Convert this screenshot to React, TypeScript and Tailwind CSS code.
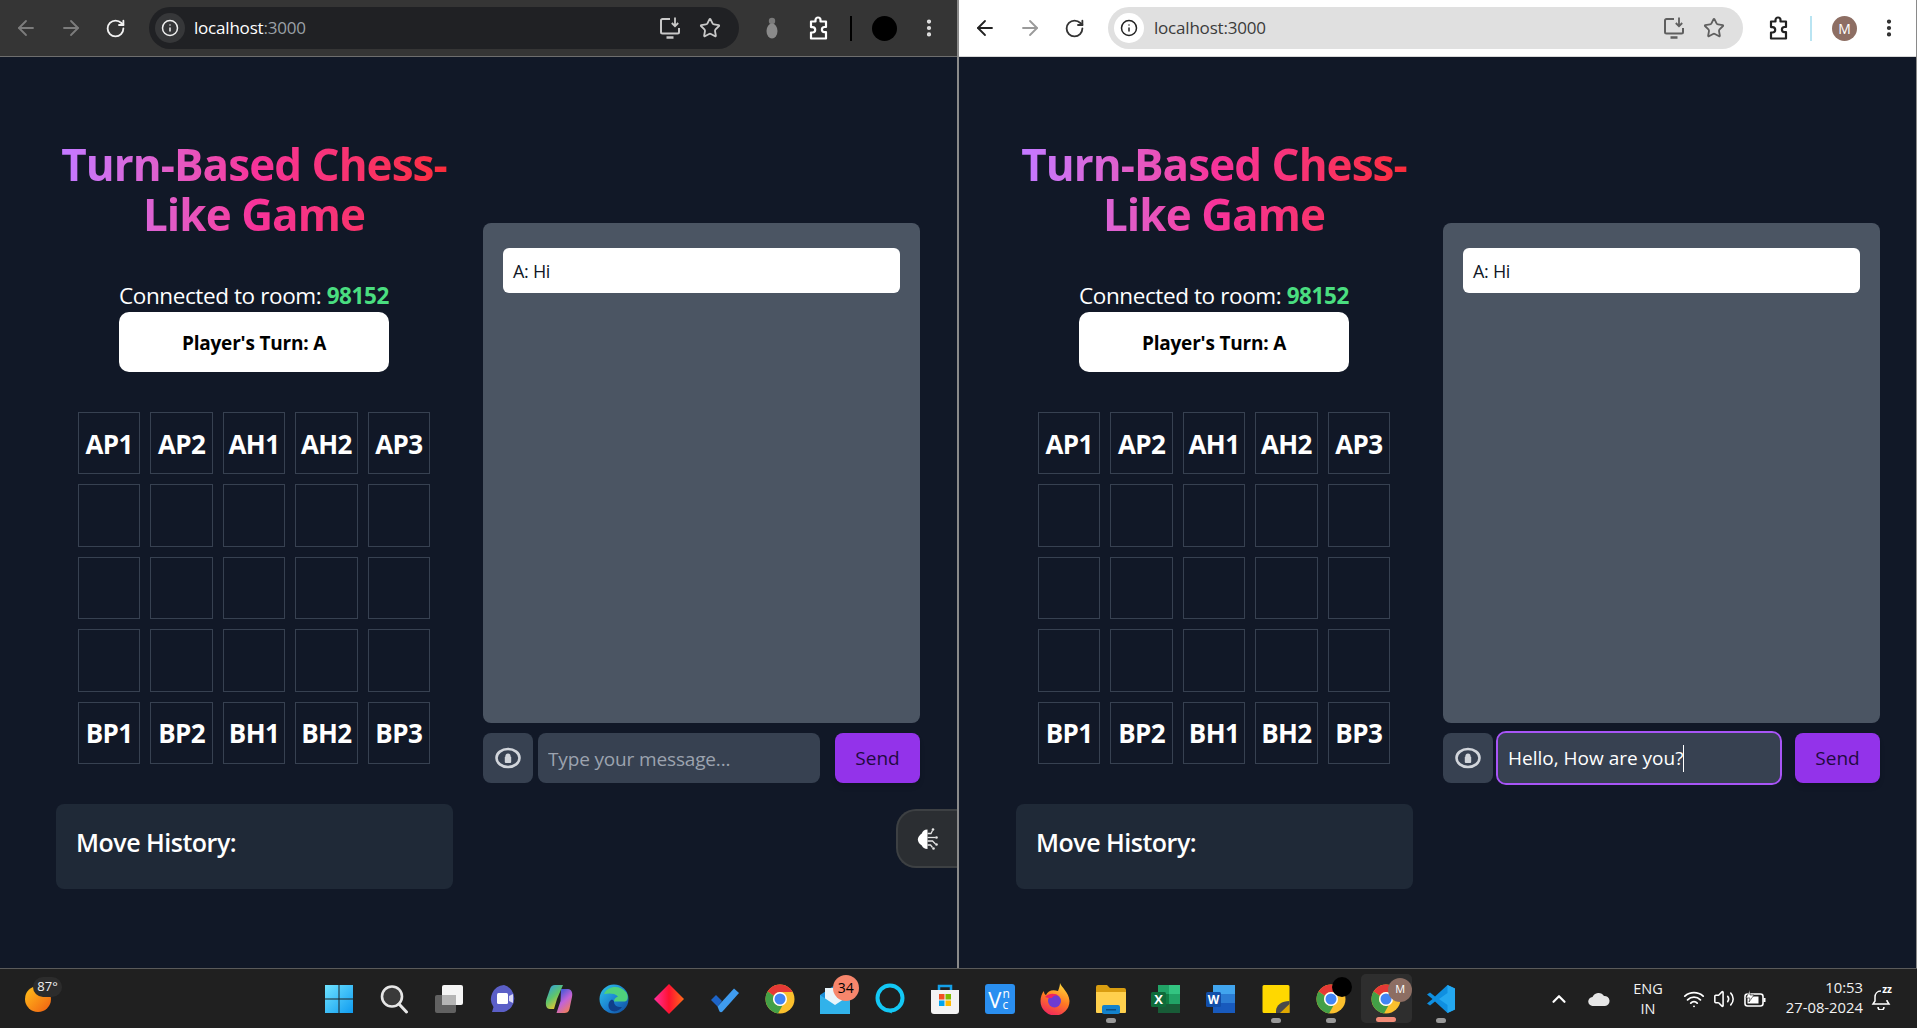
import React from "react";
import { ArrowLeft, ArrowRight, RotateCw, Star, EllipsisVertical, Info, ChevronUp, Wifi, Volume2 } from "lucide-react";

const pieces = [
  ["AP1", "AP2", "AH1", "AH2", "AP3"],
  ["", "", "", "", ""],
  ["", "", "", "", ""],
  ["", "", "", "", ""],
  ["BP1", "BP2", "BH1", "BH2", "BP3"],
];

function InstallIcon({ color }: { color: string }) {
  return (
    <svg width="24" height="24" viewBox="0 0 24 24" fill="none" stroke={color} strokeWidth="2">
      <path d="M12 3H4.500A1.500 1.500 0 0 0 3 4.500V16a1.500 1.500 0 0 0 1.500 1.500H19.500A1.500 1.500 0 0 0 21 16V12" />
      <path d="M8.500 21.500h7" strokeWidth="2.500" />
      <path d="M17 1.500V10M13.800 7l3.200 3.200L20.200 7" strokeWidth="1.800" />
    </svg>
  );
}

function PuzzleIcon({ color }: { color: string }) {
  return (
    <svg width="24" height="26" viewBox="0 0 24 26" fill="none" stroke={color} strokeWidth="2.200" strokeLinejoin="round">
      <path d="M5 6.500h4.500V5a2.500 2.500 0 0 1 5 0v1.500H20V12h-1.500a2.600 2.600 0 0 0 0 5.200H20V23.500H5V17.500h1.500a2.700 2.700 0 0 0 0-5.400H5Z" />
    </svg>
  );
}

function Toolbar({ dark }: { dark: boolean }) {
  const main = dark ? "#e3e3e3" : "#2b2b2b";
  const tool = dark ? "#c9c9c9" : "#5f5f5f";
  return (
    <div className={`flex h-[57px] shrink-0 items-center border-b pl-[3px] ${dark ? "border-[#6e6e6e] bg-[#353535]" : "border-[#d8d8d8] bg-white"}`}>
      <div className="flex h-[45px] w-[45px] items-center justify-center"><ArrowLeft size={24} strokeWidth={1.8} color={dark ? "#7c7c7c" : "#222222"} /></div>
      <div className="flex h-[45px] w-[45px] items-center justify-center"><ArrowRight size={24} strokeWidth={1.8} color={dark ? "#7c7c7c" : "#9a9a9a"} /></div>
      <div className="flex h-[45px] w-[45px] items-center justify-center"><RotateCw size={21} strokeWidth={2.1} color={dark ? "#f2f2f2" : "#333333"} /></div>
      <div className={`ml-[11px] flex h-[42px] items-center rounded-full pl-[6px] pr-[9px] ${dark ? "w-[590px] bg-[#202124]" : "w-[635px] bg-[#e0e0e0]"}`}>
        <div className={`flex h-[30px] w-[30px] items-center justify-center rounded-full ${dark ? "bg-[#363739]" : "bg-white"}`}>
          <Info size={18} strokeWidth={2} color={dark ? "#f0f0f0" : "#222222"} />
        </div>
        <div className={`flex-1 text-[17px] tracking-[-0.2px] ${dark ? "ml-[9px] text-white" : "ml-[10px] text-[#3b3b3b]"}`}>
          localhost<span className={dark ? "text-[#9aa0a6]" : "text-[#3b3b3b]"}>:3000</span>
        </div>
        <div className="flex w-[40px] justify-center"><InstallIcon color={tool} /></div>
        <div className="flex w-[40px] justify-center"><Star size={22} strokeWidth={2} color={tool} /></div>
      </div>
      {dark ? (
        <div className="ml-[22px] flex w-[22px] justify-center">
          <svg width="14" height="24" viewBox="0 0 14 24"><circle cx="7" cy="5" r="3.200" fill="#7a7a7a" /><ellipse cx="7" cy="15" rx="5.500" ry="7.500" fill="#8a8a8a" /></svg>
        </div>
      ) : null}
      <div className="ml-[20px] flex w-[30px] justify-center"><PuzzleIcon color={dark ? "#ffffff" : "#222222"} /></div>
      <div className={`ml-[17px] h-[25px] w-[2px] ${dark ? "bg-black" : "bg-[#b9e4f2]"}`} />
      <div className={`ml-[20px] flex h-[25px] w-[25px] items-center justify-center rounded-full text-[14px] ${dark ? "bg-black" : "bg-[#8d6e63] text-white"}`}>{dark ? "" : "M"}</div>
      <div className="ml-[20px] flex w-[24px] justify-center"><EllipsisVertical size={22} strokeWidth={2.600} color={main} /></div>
    </div>
  );
}

function EyeIcon() {
  return (
    <svg width="26" height="22" viewBox="0 0 26 22" fill="none">
      <ellipse cx="13" cy="11" rx="11.500" ry="9" stroke="#d1d5db" strokeWidth="2.600" />
      <circle cx="13" cy="9" r="2.600" fill="#d1d5db" />
      <rect x="9.800" y="9.500" width="6.400" height="6.500" rx="1" fill="#d1d5db" />
    </svg>
  );
}

function Window({ dark, typed, floating }: { dark: boolean; typed?: string; floating?: boolean }) {
  return (
    <div className="relative flex h-full flex-1 flex-col bg-[#111827]">
      <Toolbar dark={dark} />
      <div className={`flex flex-1 gap-[31px] ${dark ? "pl-[56px]" : "pl-[57px]"}`}>
        <div className="flex w-[396px] flex-col items-center pt-[82px]">
          <h1 className="w-full bg-gradient-to-r from-purple-400 via-pink-500 to-red-500 bg-clip-text text-center text-[44px] leading-[50px] font-bold tracking-[-0.95px] text-transparent">
            Turn-Based Chess-<br />Like Game
          </h1>
          <div className="mt-[42px] flex h-[30px] w-[270px] items-center justify-center whitespace-nowrap text-[22.500px] tracking-[-0.4px] text-white">
            Connected to room:&nbsp;<span className="font-bold text-[#4ade80]">98152</span>
          </div>
          <div className="mt-[1px] flex h-[60px] w-[270px] items-center justify-center rounded-[10px] bg-white pt-[2px] text-[19px] font-bold tracking-[-0.2px] text-black">
            Player's Turn: A
          </div>
          <div className="mt-[40px] grid h-[352px] w-[352px] grid-cols-5 grid-rows-5 gap-[10px]">
            {pieces.flat().map((p, i) => (
              <div key={i} className="flex items-center justify-center border border-[#374151] pt-[2px] text-[26px] font-bold tracking-[-0.6px] text-white">{p}</div>
            ))}
          </div>
          <div className="mt-[40px] flex h-[85px] w-[397px] items-center self-start rounded-[8px] bg-[#1f2937] pb-[7px] pl-[20px] text-[25px] font-semibold tracking-[-0.5px] text-white">
            Move History:
          </div>
        </div>
        <div className="flex w-[437px] flex-col pt-[166px]">
          <div className="h-[500px] rounded-[8px] bg-[#4b5563] px-[20px] pt-[25px]">
            <div className="flex h-[45px] items-center rounded-[6px] bg-white pl-[10px] pt-[1px] text-[18px] tracking-[-0.3px] text-[#111827]">A: Hi</div>
          </div>
          <div className="mt-[10px] flex h-[50px] items-center">
            <div className="flex h-[50px] w-[50px] items-center justify-center rounded-[8px] bg-[#374151]"><EyeIcon /></div>
            {typed ? (
              <div className="ml-[5px] flex h-[50px] w-[282px] items-center rounded-[8px] bg-[#374151] pl-[10px] pt-[1px] text-[19px] text-white outline-[2.500px] outline-[#a855f7]">
                {typed}<span className="h-[27px] w-px bg-white" />
              </div>
            ) : (
              <input
                readOnly
                placeholder="Type your message..."
                className="ml-[5px] h-[50px] w-[282px] rounded-[8px] bg-[#374151] pl-[10px] pt-[1px] text-[19px] tracking-[-0.15px] text-white placeholder:text-[#9ca3af]"
              />
            )}
            <div className="ml-[15px] flex h-[50px] w-[85px] items-center justify-center rounded-[8px] bg-[#9333ea] pt-[1px] text-[19px] text-[#220a3f] shadow-md">Send</div>
          </div>
        </div>
      </div>
      {floating ? (
        <div className="absolute right-0 top-[809px] flex h-[59px] w-[61px] items-center justify-center rounded-l-[20px] border-2 border-r-0 border-[#3d4043] bg-[#2b2e32]">
          <svg width="22" height="24" viewBox="0 0 22 24" fill="none">
            <path d="M10.500 2.500C7 2.500 5.500 4.500 4.800 6.500 2.500 8 1 10 .8 12.500 1 15 2.500 17 4.800 18.500 5.800 20.500 7.500 22 10.500 22Z" fill="#ffffff" />
            <g stroke="#e5e5e5" strokeWidth="1.300">
              <path d="M10.500 6.500h3.500l1.500-3" /><path d="M10.500 10.500h8" /><path d="M10.500 14h5l3 3" /><path d="M10.500 18h3l2 2.500" />
            </g>
            <g fill="#e5e5e5"><circle cx="16" cy="2.500" r="1.300" /><circle cx="19.500" cy="10.500" r="1.300" /><circle cx="19.500" cy="17.500" r="1.300" /><circle cx="16.500" cy="21.500" r="1.300" /></g>
          </svg>
        </div>
      ) : null}
    </div>
  );
}

function ChromeIcon() {
  return (
    <svg width="30" height="30" viewBox="0 0 30 30">
      <circle cx="15" cy="15" r="14.500" fill="#fbc02d" />
      <path d="M15 .5A14.500 14.500 0 0 1 27.600 8H15A7 7 0 0 0 8.800 11.800L2.600 7.500A14.500 14.500 0 0 1 15 .5Z" fill="#e53935" />
      <path d="M2.600 7.500A14.500 14.500 0 0 0 13 29.400L17.500 21.500A7 7 0 0 1 8.800 11.800Z" fill="#43a047" />
      <circle cx="15" cy="15" r="7" fill="#ffffff" />
      <circle cx="15" cy="15" r="5.500" fill="#4285f4" />
    </svg>
  );
}

const taskIcons: { key: string; icon: React.ReactNode; dot?: boolean; active?: boolean }[] = [
  { key: "start", icon: (
    <svg width="30" height="30" viewBox="0 0 30 30">
      <defs><linearGradient id="win" x1="0" y1="0" x2="1" y2="1"><stop offset="0" stopColor="#6fe3ff" /><stop offset="1" stopColor="#0f9bf0" /></linearGradient></defs>
      <path d="M1 1h13.500v13.500H1zM15.500 1H29v13.500H15.500zM1 15.500h13.500V29H1zM15.500 15.500H29V29H15.500z" fill="url(#win)" />
    </svg>) },
  { key: "search", icon: (
    <svg width="30" height="30" viewBox="0 0 30 30" fill="none"><circle cx="13" cy="12.500" r="10" fill="#3a3a3a" stroke="#e6e6e6" strokeWidth="2.600" /><path d="M20 20l7.500 8" stroke="#e6e6e6" strokeWidth="3" strokeLinecap="round" /></svg>) },
  { key: "taskview", icon: (
    <svg width="30" height="30" viewBox="0 0 30 30"><rect x="1" y="11" width="21" height="18" rx="2" fill="#616161" /><rect x="8" y="1" width="21" height="20" rx="2" fill="#f5f5f5" /><rect x="8" y="11" width="14" height="10" fill="#b5b5b5" /></svg>) },
  { key: "teams", icon: (
    <svg width="30" height="30" viewBox="0 0 30 30"><path d="M15 1a14 14 0 0 1 0 27H3l1.500-5A14 14 0 0 1 15 1Z" fill="#5b5fc7" /><rect x="8" y="9" width="11" height="11" rx="1.500" fill="#ffffff" /><path d="M20 12l4-2v9l-4-2z" fill="#d9d9f5" /></svg>) },
  { key: "copilot", icon: (
    <svg width="30" height="30" viewBox="0 0 30 30">
      <defs>
        <linearGradient id="cop1" x1="0" y1="0" x2="0.600" y2="1"><stop offset="0" stopColor="#2b9bf0" /><stop offset="0.55" stopColor="#5fc56b" /><stop offset="1" stopColor="#f5c52b" /></linearGradient>
        <linearGradient id="cop2" x1="0.200" y1="0" x2="0.800" y2="1"><stop offset="0" stopColor="#2f57d8" /><stop offset="0.5" stopColor="#c263d8" /><stop offset="1" stopColor="#f5824a" /></linearGradient>
      </defs>
      <path d="M11 1h8l-6 14-3 10H6C2 25 1 20 2.500 15L6 5c.8-2.500 2.500-4 5-4Z" fill="url(#cop1)" />
      <path d="M17 5h7c3.500 0 5 4 4 8l-2.500 12c-.8 3-2.500 4-5 4h-8l4-12Z" fill="url(#cop2)" />
    </svg>) },
  { key: "edge", icon: (
    <svg width="30" height="30" viewBox="0 0 30 30">
      <defs><linearGradient id="edge" x1="0" y1="0" x2="1" y2="1"><stop offset="0" stopColor="#2fc4e8" /><stop offset="0.55" stopColor="#1a7fd0" /><stop offset="1" stopColor="#114a96" /></linearGradient></defs>
      <circle cx="15" cy="15" r="14.500" fill="url(#edge)" />
      <path d="M5 10C8 2.500 20 0 27 8c2.500 3 2.500 9-1 9.500H15c0-3 2-4 4-5-4-4-10-3-14-2.500Z" fill="#4fd17c" />
      <path d="M15 17.500c0 4 3.500 6 8 5.500-2 3-6 5.500-10 4-4-1.500-5-8-1-11 1-.5 2.500 0 3 1.500Z" fill="#0f3f8a" />
    </svg>) },
  { key: "anydesk", icon: (
    <svg width="30" height="30" viewBox="0 0 30 30">
      <defs><linearGradient id="dia" x1="0" y1="0" x2="1" y2="0"><stop offset="0" stopColor="#ff2fa0" /><stop offset="0.5" stopColor="#ff1230" /><stop offset="1" stopColor="#ff6a1a" /></linearGradient></defs>
      <path d="M15 0l15 15-15 15L0 15Z" fill="url(#dia)" />
    </svg>) },
  { key: "todo", icon: (
    <svg width="30" height="30" viewBox="0 0 30 30"><path d="M1 16l5-5 6 6-4.500 5.500Z" fill="#1d64c8" /><path d="M7.500 22.500L24 4.500l5 4.500-16.500 18.500c-1 1-2 1-3 0Z" fill="#3f9cf0" /></svg>) },
  { key: "chrome", icon: <ChromeIcon /> },
  { key: "mail", icon: (
    <div className="relative h-[30px] w-[30px]">
      <svg width="30" height="30" viewBox="0 0 30 30"><path d="M0 11L15 1l15 10v19H0Z" fill="#1b8fd8" /><path d="M5 4h20v13l-10 7-10-7Z" fill="#e9f5fb" /><path d="M0 11l15 10 15-10v19H0Z" fill="#31b2ea" /></svg>
      <div className="absolute left-[13px] top-[-9px] flex h-[26px] w-[26px] items-center justify-center rounded-full bg-[#f7866c] text-[14px] text-black">34</div>
    </div>) },
  { key: "alexa", icon: (
    <svg width="32" height="32" viewBox="0 0 32 32" fill="none"><circle cx="16" cy="15" r="12.500" stroke="#13c8f5" strokeWidth="4" /><path d="M12 27.500l6 3-1-4Z" fill="#13c8f5" /></svg>) },
  { key: "store", icon: (
    <svg width="30" height="32" viewBox="0 0 30 32" fill="none">
      <path d="M9 8V3h12v5" stroke="#14a0e8" strokeWidth="2.500" />
      <path d="M1 7h28v21a3 3 0 0 1-3 3H4a3 3 0 0 1-3-3Z" fill="#f3f3f3" />
      <rect x="9" y="11" width="5.500" height="5.500" fill="#f25022" /><rect x="15.500" y="11" width="5.500" height="5.500" fill="#7fba00" /><rect x="9" y="17.500" width="5.500" height="5.500" fill="#00a4ef" /><rect x="15.500" y="17.500" width="5.500" height="5.500" fill="#ffb900" />
    </svg>) },
  { key: "vnc", icon: (
    <div className="flex h-[30px] w-[30px] items-center rounded-[3px] bg-[#2a8ff0] pl-[3px] text-[22px] leading-none text-white">
      V<span className="ml-[1px] flex flex-col text-[12px] leading-[11px]"><span>n</span><span>c</span></span>
    </div>) },
  { key: "firefox", icon: (
    <svg width="30" height="32" viewBox="0 0 30 32">
      <defs><linearGradient id="ff" x1="0.700" y1="0" x2="0.300" y2="1"><stop offset="0" stopColor="#ffd83a" /><stop offset="0.5" stopColor="#ff7a22" /><stop offset="1" stopColor="#f0245e" /></linearGradient></defs>
      <path d="M20 0c1 4 9 9 9.500 18A14.500 14.500 0 0 1 .5 18C.5 14 2 10 4 8c0 2 .5 3.500 2 4C8 8 12 6 18 8c1-3 2-5 2-8Z" fill="url(#ff)" />
      <circle cx="14.500" cy="18" r="6.500" fill="#6d3bd1" />
      <path d="M5 14c4-4 10-4 14-1-4-1-6 0-7 2-3 0-5 0-7-1Z" fill="#f0245e" />
    </svg>) },
  { key: "files", dot: true, icon: (
    <svg width="30" height="30" viewBox="0 0 30 30"><path d="M0 3a2 2 0 0 1 2-2h9l3 3h14a2 2 0 0 1 2 2v3H0Z" fill="#d99d10" /><path d="M0 8h30v20a1 1 0 0 1-1 1H1a1 1 0 0 1-1-1Z" fill="#ffd04d" /><rect x="6" y="21" width="18" height="9" rx="2" fill="#1382cc" /><rect x="10" y="25" width="10" height="1.500" fill="#0a4f85" /></svg>) },
  { key: "excel", icon: (
    <svg width="30" height="30" viewBox="0 0 30 30"><path d="M7 1h22v28H7Z" fill="#21a366" /><path d="M18 1h11v9H18Z" fill="#33c481" /><path d="M7 10h11v10H7Z" fill="#107c41" /><path d="M18 20h11v9H18Z" fill="#185c37" /><path d="M7 20h11v9H7Z" fill="#185c37" /><rect x="0" y="8" width="15" height="15" rx="1.500" fill="#0f6b3a" /><text x="7.500" y="20" textAnchor="middle" fontSize="13" fontWeight="700" fill="#fff" fontFamily="'Open Sans',sans-serif">X</text></svg>) },
  { key: "word", icon: (
    <svg width="30" height="30" viewBox="0 0 30 30"><path d="M7 1h22v9H7Z" fill="#41a5ee" /><path d="M7 10h22v9H7Z" fill="#2b7cd3" /><path d="M7 19h22v10H7Z" fill="#185abd" /><rect x="0" y="8" width="15" height="15" rx="1.500" fill="#124ea8" /><text x="7.500" y="20" textAnchor="middle" fontSize="12" fontWeight="700" fill="#fff" fontFamily="'Open Sans',sans-serif">W</text></svg>) },
  { key: "sticky", dot: true, icon: (
    <svg width="28" height="30" viewBox="0 0 28 30"><path d="M2 1h24a1.500 1.500 0 0 1 1.500 1.500V29H2a1.500 1.500 0 0 1-1.500-1.500V2.500A1.500 1.500 0 0 1 2 1Z" fill="#ffd800" /><path d="M27.500 17V27.500A1.500 1.500 0 0 1 26 29H14v-2c0-6 6-10 13.500-10Z" fill="#4a4a4a" /><path d="M27.500 20v7.500A1.500 1.500 0 0 1 26 29H18Z" fill="#e0a800" /></svg>) },
  { key: "chrome2", dot: true, icon: (
    <div className="relative h-[30px] w-[30px]"><ChromeIcon /><div className="absolute left-[16px] top-[-7px] h-[20px] w-[20px] rounded-full bg-black" /></div>) },
  { key: "chrome3", active: true, icon: (
    <div className="relative h-[30px] w-[30px]"><ChromeIcon /><div className="absolute left-[17px] top-[-6px] flex h-[24px] w-[24px] items-center justify-center rounded-full bg-[#8d6e63] text-[11px] text-white">M</div></div>) },
  { key: "vscode", dot: true, icon: (
    <svg width="30" height="30" viewBox="0 0 30 30"><path d="M21.500 1L29 4.500v21L21.500 29 9 17.500l-5 4L1 19.500 6.500 15 1 10.500 4 8.500l5 4Z" fill="#0f8fe0" /><path d="M21.500 1L29 4.500v21L21.500 29V21L13 15l8.500-6Z" fill="#24a8f0" /></svg>) },
];

function Taskbar() {
  return (
    <div className="flex h-[60px] shrink-0 items-center border-t border-[#5a5a5a] bg-[#202020] text-white">
      <div className="flex h-full w-[311px] items-center pl-[25px]">
        <div className="relative h-[26px] w-[26px]">
          <div className="h-[26px] w-[26px] rounded-full bg-gradient-to-br from-[#ffc21a] to-[#ee5a12]" />
          <div className="absolute left-[8px] top-[-9px] flex h-[20px] w-[29px] items-center justify-center rounded-[10px] bg-[#2c2c2c] text-[13px] text-[#f0f0f0]">87°</div>
        </div>
      </div>
      {taskIcons.map((t) => (
        <div key={t.key} className="relative flex h-full w-[55.150px] items-center justify-center">
          {t.active ? <div className="absolute inset-x-[2px] top-[5px] bottom-[5px] rounded-[5px] bg-[#2e2e2e]" /> : null}
          <div className="relative">{t.icon}</div>
          {t.dot ? <div className="absolute bottom-[5px] h-[5px] w-[10px] rounded-full bg-[#9a9a9a]" /> : null}
          {t.active ? <div className="absolute bottom-[6px] h-[5px] w-[20px] rounded-full bg-[#f28b77]" /> : null}
        </div>
      ))}
      <div className="ml-[77px] flex w-[26px] justify-center"><ChevronUp size={22} strokeWidth={2.400} color="#ffffff" /></div>
      <div className="ml-[14px] flex w-[26px] justify-center">
        <svg width="22" height="14" viewBox="0 0 22 14"><path d="M5 14a4.500 4.500 0 0 1-.5-9A6.500 6.500 0 0 1 16 4a5 5 0 0 1 1 10Z" fill="#e6e6e6" /></svg>
      </div>
      <div className="ml-[14px] flex w-[44px] flex-col items-center text-[14.500px] leading-[20px] text-[#f2f2f2]"><span>ENG</span><span>IN</span></div>
      <div className="ml-[12px] flex w-[24px] justify-center"><Wifi size={22} strokeWidth={2} color="#ffffff" /></div>
      <div className="ml-[6px] flex w-[24px] justify-center"><Volume2 size={22} strokeWidth={1.700} color="#ffffff" /></div>
      <div className="ml-[7px] flex w-[24px] justify-center">
        <svg width="22" height="18" viewBox="0 0 22 18" fill="none"><rect x="1" y="4" width="18" height="12" rx="2.500" stroke="#fff" strokeWidth="1.600" /><rect x="3.500" y="6.500" width="11" height="7" fill="#fff" /><rect x="19.500" y="8" width="2" height="4" fill="#fff" /><path d="M6 0L2 8h4l-1 4 5-7H6Z" fill="#fff" stroke="#202020" strokeWidth="0.600" /></svg>
      </div>
      <div className="flex w-[96px] flex-col items-end pb-[3px] text-[14.800px] leading-[20px] text-[#f2f2f2]"><span>10:53</span><span>27-08-2024</span></div>
      <div className="relative ml-[6px] flex w-[24px] justify-center">
        <svg width="20" height="22" viewBox="0 0 20 22" fill="none" stroke="#fff" strokeWidth="1.500"><path d="M10 3C6 3 4 6 4 9v4l-2 3h16l-2-3v-1" /><path d="M7 19a3 3 0 0 0 6 0" /></svg>
        <span className="absolute right-[1px] top-[-5px] text-[10px] font-bold leading-[12px] text-white">zz</span>
      </div>
    </div>
  );
}

export default function App() {
  return (
    <div className="flex h-[1028px] w-[1917px] flex-col overflow-hidden bg-[#111827] font-['Open_Sans',sans-serif]">
      <div className="flex h-[968px] shrink-0">
        <div className="h-full w-[957px]"><Window dark floating /></div>
        <div className="h-full w-[2px] bg-[#8a8a8a]" />
        <div className="h-full flex-1 border-r border-[#8a8a8a]"><Window dark={false} typed="Hello, How are you?" /></div>
      </div>
      <Taskbar />
    </div>
  );
}
